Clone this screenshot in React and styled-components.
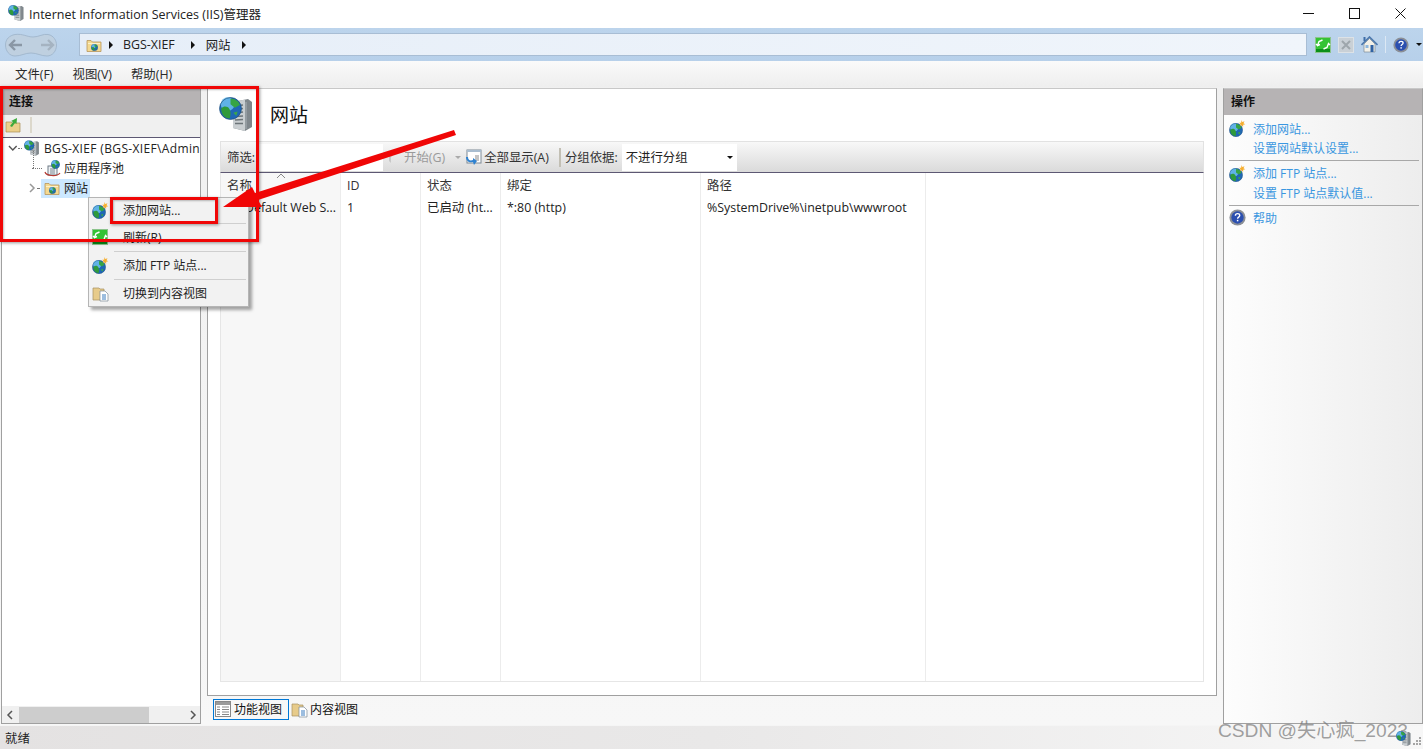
import React from 'react'
import styled, { createGlobalStyle } from 'styled-components'

const GlobalStyle = createGlobalStyle`
  html, body { margin: 0; padding: 0; background: #f5f5f5; }
  * { box-sizing: border-box; }
  body {
    font-family: "Open Sans", "Noto Sans CJK SC", sans-serif;
    font-size: 12.4px;
    color: #1c1c1c;
  }
`

const Window = styled.div`
  position: relative;
  width: 1423px;
  height: 749px;
  overflow: hidden;
  display: flex;
  flex-direction: column;
`

const TitleBar = styled.header`
  height: 28px;
  flex: none;
  background: #fff;
  display: flex;
  align-items: center;
  padding: 0 0 2px 8px;
  gap: 5px;
  font-size: 12.5px;
  color: #222;
`

const WindowControls = styled.div`
  margin-left: auto;
  display: flex;
  align-items: center;
  height: 100%;
`

const WindowButton = styled.div`
  width: 46px;
  height: 100%;
  display: flex;
  align-items: center;
  justify-content: center;
`

const AddressBar = styled.div`
  height: 33px;
  flex: none;
  display: flex;
  align-items: center;
  background: linear-gradient(#bcd4ec, #b7d0ea);
  padding: 0 0 0 5px;
`

const NavPill = styled.svg`
  flex: none;
  margin-right: 22px;
`

const Breadcrumb = styled.div`
  width: 1228px;
  height: 23px;
  background: linear-gradient(90deg, #e6eef8, #f0f5fb);
  border: 1px solid #a8bdd4;
  display: flex;
  align-items: center;
  padding-left: 6px;
  color: #222;
`

const Crumb = styled.span`
  margin: 0 ${(p) => p.$right}px 0 ${(p) => p.$left}px;
`

const Caret = styled.span`
  width: 0;
  height: 0;
  border-top: 4px solid transparent;
  border-bottom: 4px solid transparent;
  border-left: 4px solid #111;
  margin-left: ${(p) => p.$gap || 0}px;
`

const AddressTools = styled.div`
  display: flex;
  align-items: center;
  margin-left: 8px;
  gap: 7px;
`

const ToolSep = styled.span`
  width: 1px;
  height: 17px;
  background: #dce8f4;
`

const DownArrow = styled.span`
  width: 0;
  height: 0;
  border-left: 3px solid transparent;
  border-right: 3px solid transparent;
  border-top: 3px solid ${(p) => p.$color || '#111'};
`

const MenuBar = styled.nav`
  height: 26px;
  flex: none;
  display: flex;
  align-items: center;
  gap: 19px;
  padding: 0 0 1px 15px;
  background: linear-gradient(#fafafa, #eeeeee);
  font-size: 12.4px;
  color: #2a2a2a;
`

const Main = styled.main`
  flex: 1;
  min-height: 0;
  display: flex;
  gap: 6px;
  padding: 1px 0 1px 1px;
  background: linear-gradient(#f0f0f0, #f7f7f7);
`

const SidePanel = styled.section`
  width: 200px;
  flex: none;
  border: 1px solid #a0a0a0;
  border-top-color: #c8c8c8;
  background: ${(p) => p.$bg || '#fff'};
  display: flex;
  flex-direction: column;
`

const PanelHeader = styled.h2`
  margin: 0;
  height: 26px;
  flex: none;
  background: #b6b3b4;
  font-size: 12px;
  font-weight: 700;
  color: #111;
  display: flex;
  align-items: center;
  padding: 0 0 2px 7px;
`

const TreeToolbar = styled.div`
  height: 23px;
  flex: none;
  background: #f0f0f0;
  border-bottom: 1px solid #5d5873;
  display: flex;
  align-items: center;
  padding: 0 0 2px 3px;
  gap: 9px;
`

const ToolbarRule = styled.span`
  width: 2px;
  height: 16px;
  background: #dcd8cc;
`

const Tree = styled.ul`
  flex: 1;
  margin: 0;
  padding: 0;
  list-style: none;
  overflow: hidden;
  font-size: 12px;
`

const TreeRow = styled.li`
  position: relative;
  height: 20px;
  display: flex;
  align-items: center;
  white-space: nowrap;
  padding-left: ${(p) => p.$indent}px;
  color: #222;
`

const TreeDots = styled.span`
  width: ${(p) => p.$w}px;
  margin-right: 2px;
  border-top: 1px dotted #777;
  flex: none;
`

const TreeStem = styled.span`
  position: absolute;
  left: 31px;
  top: -7px;
  height: 17px;
  border-left: 1px dotted #777;
`

const TreeLabel = styled.span`
  margin-left: ${(p) => p.$gap || 4}px;
  letter-spacing: ${(p) => p.$spread || 0}px;
`

const SelectedNode = styled.span`
  display: flex;
  align-items: center;
  height: 19px;
  background: #cce8ff;
  width: 49px;
  padding-left: 3px;
  gap: 4px;
`

const HScroll = styled.div`
  height: 17px;
  flex: none;
  background: #f0f0f0;
  display: flex;
  align-items: center;
  justify-content: space-between;
  padding: 0 2px 0 3px;
`

const ScrollThumb = styled.span`
  width: 130px;
  height: 16px;
  background: #cdcdcd;
  margin-right: auto;
  margin-left: 4px;
`

const CenterColumn = styled.div`
  width: 1010px;
  flex: none;
  display: flex;
  flex-direction: column;
`

const CenterPanel = styled.section`
  flex: 1;
  min-height: 0;
  background: #fff;
  border: 1px solid #a0a0a0;
  border-top-color: #c8c8c8;
  display: flex;
  flex-direction: column;
  padding: 0 12px 13px 12px;
`

const PageHeader = styled.div`
  height: 52px;
  flex: none;
  display: flex;
  align-items: center;
  gap: 17px;
  padding: 0 0 3px 0;
  margin-left: -1px;
`

const PageTitle = styled.h1`
  margin: 0;
  font-size: 19px;
  font-weight: 400;
  color: #111;
`

const FilterBar = styled.div`
  height: 32px;
  flex: none;
  display: flex;
  align-items: center;
  background: linear-gradient(#f8f8f8, #dadada);
  border: 1px solid #e2e2e2;
  border-bottom: 1px solid #5d5873;
  padding-left: 6px;
  color: #333;
`

const FilterBox = styled.span`
  width: 127px;
  height: 27px;
  margin: 0 0 0 1px;
  background: #fff;
  display: flex;
  align-items: center;
  justify-content: flex-end;
  padding-right: 3px;
`

const FilterText = styled.span`
  display: inline-flex;
  align-items: center;
  color: ${(p) => p.$color || '#333'};
  margin-left: ${(p) => p.$gap || 0}px;
  white-space: nowrap;
`

const BarSep = styled.span`
  width: 2px;
  height: 19px;
  background: #c2bfb4;
  margin: 0 4px 0 10px;
`

const GroupSelect = styled.span`
  width: 115px;
  height: 27px;
  margin-left: 4px;
  background: #fff;
  display: flex;
  align-items: center;
  justify-content: space-between;
  padding: 0 4px;
  color: #222;
`

const Table = styled.div`
  flex: 1;
  min-height: 0;
  display: grid;
  grid-template-columns: 120px 80px 80px 200px 225px 1fr;
  border: 1px solid #e6e6e6;
  border-top: 0;
`

const Column = styled.div`
  border-right: 1px solid #ececec;
  background: ${(p) => (p.$tinted ? '#f7f7f7' : '#fff')};
  color: #333;
  padding-left: 6px;
  position: relative;
  white-space: nowrap;
  overflow: hidden;
  &:last-child { border-right: 0; }
`

const HeadCell = styled.div`
  height: 25px;
  line-height: 25px;
`

const BodyCell = styled.div`
  height: 19px;
  line-height: 19px;
  color: #222;
  padding-left: ${(p) => (p.$icon ? 18 : 0)}px;
`

const SortMark = styled.svg`
  position: absolute;
  left: 55px;
  top: 0;
`

const ViewTabs = styled.div`
  height: 28px;
  flex: none;
  display: flex;
  align-items: center;
  padding: 0 0 2px 6px;
  gap: 1px;
  font-size: 12px;
`

const ViewTab = styled.div`
  height: 21px;
  display: flex;
  align-items: center;
  gap: ${(p) => (p.$active ? 3 : 2)}px;
  padding: 0 ${(p) => (p.$active ? 6 : 2)}px 0 ${(p) => (p.$active ? 1 : 0)}px;
  border: 1px solid ${(p) => (p.$active ? '#0078d7' : 'transparent')};
  color: #111;
`

const ActionList = styled.ul`
  list-style: none;
  margin: 0;
  padding: 4px 3px 0 5px;
  flex: 1;
  font-size: 12px;
`

const ActionRow = styled.li`
  height: 19.5px;
  display: flex;
  align-items: center;
  gap: 7px;
  padding-left: ${(p) => (p.$plain ? 24 : 0)}px;
  color: #3a97e0;
  white-space: nowrap;
`

const ActionRule = styled.li`
  height: 1px;
  background: #a8a8a8;
  margin: 2px 0 2.5px 0;
`

const StatusBar = styled.footer`
  height: 24px;
  flex: none;
  display: flex;
  align-items: center;
  justify-content: space-between;
  padding: 0 1px 0 5px;
  background: linear-gradient(90deg, #e4e2e2, #e9e8e8 50%, #f7f7f7);
  border-top: 1px solid #f5f5f5;
  color: #222;
`

const StatusTray = styled.div`
  position: relative;
  z-index: 2;
  display: flex;
  align-items: flex-end;
  gap: 1px;
  padding-top: 2px;
`

const ContextMenu = styled.div`
  position: absolute;
  left: 88px;
  top: 197px;
  width: 161px;
  height: 110px;
  background: #f2f2f2;
  border: 1px solid #b5b5b5;
  box-shadow: 3px 3px 3px rgba(0, 0, 0, 0.35);
  padding: 0 1px;
  font-size: 12px;
`

const MenuItem = styled.div`
  height: ${(p) => (p.$first ? 26 : 28)}px;
  display: flex;
  align-items: center;
  gap: 14px;
  padding: 0 0 2px 2px;
  color: #222;
  white-space: nowrap;
  position: relative;
  &::after {
    content: '';
    display: ${(p) => (p.$last ? 'none' : 'block')};
    position: absolute;
    left: 24px;
    right: 1px;
    bottom: 0;
    height: 1px;
    background: #cfcfcf;
  }
`

const MenuIcon = styled.span`
  width: 17px;
  height: 17px;
  flex: none;
  display: flex;
`

const RedBox = styled.div`
  position: absolute;
  left: ${(p) => p.$x}px;
  top: ${(p) => p.$y}px;
  width: ${(p) => p.$w}px;
  height: ${(p) => p.$h}px;
  border: 3px solid #f00606;
  box-shadow: 1px 1px 3px rgba(0, 0, 0, 0.4), inset 1px 1px 2px rgba(0, 0, 0, 0.25);
`

const ArrowLayer = styled.svg`
  position: absolute;
  left: 0;
  top: 0;
  pointer-events: none;
`

const Watermark = styled.div`
  position: absolute;
  right: 15px;
  bottom: 6px;
  font-family: "Liberation Sans", "Noto Sans CJK SC", sans-serif;
  font-size: 19.2px;
  color: rgba(120, 120, 120, 0.7);
  white-space: nowrap;
`

const Globe = ({ size = 16, x = 0, y = 0 }) => (
  <svg x={x} y={y} width={size} height={size} viewBox="0 0 16 16">
    <circle cx="8" cy="8" r="7.6" fill="#1f67b5" />
    <circle cx="6" cy="5" r="4.8" fill="#6cc0f0" opacity="0.85" />
    <path d="M1.500 8c2-2 4.500-1.500 5.500 0s1.500 3 .5 7C4 15 1.500 12 1.500 8z" fill="#2f9a3c" />
    <path d="M8 1c3 0 6 2 6.500 4.500l-3.500 2-3-2.500z" fill="#36a444" />
    <path d="M10 11l3-1-1 3z" fill="#3ba648" />
    <circle cx="8" cy="8" r="7.6" fill="none" stroke="#1d4f7f" strokeWidth="0.5" />
  </svg>
)

const StarGlobe = () => (
  <svg width="17" height="17" viewBox="0 0 17 17">
    <Globe size={14} x={0} y={3} />
    <path d="M12.500 0l.8 2 2.200-.8-1 2 1.800 1-2.100.5-.1 2.200-1.400-1.600-1.900.9.800-2-1.500-1.500 2.100.1z" fill="#f6ae2f" />
  </svg>
)

const ServerGlobe = ({ size = 16 }) => (
  <svg width={size} height={size} viewBox="0 0 34 34">
    <path d="M14 5l15-3 4 3v25l-7 4-12-3z" fill="#7f878c" />
    <path d="M14 5l12-2.500V34l-12-3z" fill="#c9ced1" />
    <path d="M27 5v27" stroke="#a9b0b5" />
    <path d="M16 9l8-1M16 12.500l8-1M16 16l8-1M16 19.500l8-.5M16 23l8-.5M16 26.500l8 0" stroke="#6d7579" strokeWidth="1.400" />
    <Globe size={23} x={0} y={0} />
  </svg>
)

const FolderGlobe = () => (
  <svg width="16" height="16" viewBox="0 0 16 16">
    <path d="M1 3.500h4l1.500 1.500H15v9.500H1z" fill="#f4d990" stroke="#b8955a" strokeWidth="0.8" />
    <path d="M2 6h12v1H2z" fill="#fdf1c8" />
    <Globe size={7} x={5} y={7} />
  </svg>
)

const PoolIcon = () => (
  <svg width="17" height="17" viewBox="0 0 17 17">
    <rect x="4" y="6" width="9" height="9" fill="#eef2f5" stroke="#6f7b85" />
    <path d="M6 9h5M6 11h5M6 13h5" stroke="#7a8791" />
    <Globe size={9} x={7} y={0} />
    <path d="M1 12c1 4 12 5 15 1" fill="none" stroke="#b53a32" strokeWidth="1.200" />
  </svg>
)

const RefreshIcon = () => (
  <svg width="16" height="16" viewBox="0 0 16 16">
    <rect x="0.500" y="0.500" width="15" height="15" fill="#34c334" stroke="#8cc48c" />
    <rect x="1" y="12" width="14" height="3" fill="#0c8f18" />
    <path d="M7.500 3L4 4.500 2.500 8.500 1 7" fill="none" stroke="#fff" strokeWidth="1.400" />
    <path d="M2.500 8.500L5 7.500" stroke="#fff" strokeWidth="1.400" />
    <path d="M8.500 12l3.500-1.500 1.500-4 1.500 1.500" fill="none" stroke="#fff" strokeWidth="1.400" />
  </svg>
)

const StopIcon = () => (
  <svg width="16" height="16" viewBox="0 0 16 16">
    <rect x="0.500" y="0.500" width="15" height="15" fill="#c9d0d6" stroke="#dde2e6" />
    <path d="M4 4l8 8M12 4l-8 8" stroke="#9ea6ac" strokeWidth="2" />
  </svg>
)

const HomeIcon = () => (
  <svg width="17" height="17" viewBox="0 0 17 17">
    <path d="M3 8l5.500-5.500L14 8v8H3z" fill="#f3f1e8" stroke="#7d8a96" strokeWidth="0.700" />
    <path d="M0.500 9L8.500 1l8 8" fill="none" stroke="#4d79ad" strokeWidth="1.600" />
    <rect x="2.500" y="1" width="2" height="4" fill="#3f6ea8" />
    <rect x="9.500" y="9" width="3" height="7" fill="#2f62a3" />
    <rect x="4.500" y="9" width="3" height="3" fill="#8fb8dd" />
  </svg>
)

const HelpIcon = ({ size = 16 }) => (
  <svg width={size} height={size} viewBox="0 0 16 16">
    <circle cx="8" cy="8" r="7.600" fill="#8b8f96" />
    <circle cx="8" cy="8" r="5.800" fill="#2b4fb0" />
    <path d="M6 6.300C6 5 7 4.400 8.100 4.400c1.200 0 2 .7 2 1.700 0 1.500-2 1.500-2 3" fill="none" stroke="#fff" strokeWidth="1.300" />
    <rect x="7.400" y="10.200" width="1.400" height="1.400" fill="#fff" />
  </svg>
)

const Chevron = ({ dir = 'right', color = '#888' }) => (
  <svg width="10" height="10" viewBox="0 0 10 10">
    <path d={dir === 'down' ? 'M1 3l4 4 4-4' : dir === 'left' ? 'M7 1L3 5l4 4' : 'M3 1l4 4-4 4'} fill="none" stroke={color} strokeWidth="1.500" />
  </svg>
)

const AddSiteFolder = () => (
  <svg width="16" height="16" viewBox="0 0 16 16">
    <path d="M1 5h5l1 1h8v9H1z" fill="#ecd08b" stroke="#a98c54" strokeWidth="0.700" />
    <path d="M5 9l3-4-2-1 6-3-.5 6-1.500-1-3 4z" fill="#3cab3c" />
  </svg>
)

const PagesIcon = () => (
  <svg width="17" height="17" viewBox="0 0 17 17">
    <path d="M1 3h6l1 1h4v11H1z" fill="#e7cb8a" stroke="#a78f5f" strokeWidth="0.700" />
    <path d="M8 6h5l3 3v7H8z" fill="#fff" stroke="#7d8a96" strokeWidth="0.700" />
    <path d="M10 10h4M10 12h4M10 14h4" stroke="#3a7cc0" />
  </svg>
)

const GridIcon = () => (
  <svg width="16" height="16" viewBox="0 0 16 16">
    <rect x="0.500" y="0.500" width="15" height="15" fill="#fff" stroke="#888" />
    <rect x="1" y="1" width="14" height="3" fill="#9a9a9a" />
    <path d="M2 6h3M2 8.500h3M2 11h3M2 13.500h3M7 6h7M7 8.500h7M7 11h7M7 13.500h7" stroke="#888" />
  </svg>
)

const ShowAllIcon = () => (
  <svg width="17" height="17" viewBox="0 0 17 17">
    <rect x="2" y="1" width="14" height="13" fill="#fff" stroke="#7d8a96" />
    <rect x="2" y="1" width="14" height="2" fill="#a9bdd0" />
    <path d="M10 7h4M10 9h4M10 11h4" stroke="#8a8a8a" />
    <path d="M1 8c0 4 3 6 7 5l1 3 3-4-4-3v2C5 12 3 11 3 8z" fill="#2f82d0" />
  </svg>
)

const StartIcon = () => (
  <svg width="14" height="14" viewBox="0 0 14 14">
    <path d="M1 3h11L8 7v6l-2-2V7z" fill="#c8c8c8" />
  </svg>
)

const GripDots = () => (
  <svg width="10" height="10" viewBox="0 0 10 10">
    <path d="M7 1h2v2H7zM4 4h2v2H4zM7 4h2v2H7zM1 7h2v2H1zM4 7h2v2H4zM7 7h2v2H7z" fill="#a5a5a5" />
  </svg>
)

const columns = [
  { title: '名称', cell: 'Default Web S...', tinted: true },
  { title: 'ID', cell: '1' },
  { title: '状态', cell: '已启动 (ht...' },
  { title: '绑定', cell: '*:80 (http)' },
  { title: '路径', cell: '%SystemDrive%\\inetpub\\wwwroot' },
  { title: '', cell: '' },
]

const menuItems = [
  { icon: <StarGlobe />, label: '添加网站...', first: true },
  { icon: <RefreshIcon />, label: '刷新(R)' },
  { icon: <StarGlobe />, label: '添加 FTP 站点...' },
  { icon: <PagesIcon />, label: '切换到内容视图', last: true },
]

function App() {
  return (
    <Window>
      <GlobalStyle />
      <TitleBar>
        <ServerGlobe size={16} />
        <span>Internet Information Services (IIS)管理器</span>
        <WindowControls>
          <WindowButton>
            <svg width="11" height="11" viewBox="0 0 11 11"><path d="M0 5.500h11" stroke="#111" /></svg>
          </WindowButton>
          <WindowButton>
            <svg width="11" height="11" viewBox="0 0 11 11"><rect x="0.500" y="0.500" width="10" height="10" fill="none" stroke="#111" /></svg>
          </WindowButton>
          <WindowButton>
            <svg width="11" height="11" viewBox="0 0 11 11"><path d="M0.500 0.500l10 10M10.500 0.500l-10 10" stroke="#111" /></svg>
          </WindowButton>
        </WindowControls>
      </TitleBar>

      <AddressBar>
        <NavPill width="52" height="24" viewBox="0 0 52 24">
          <path d="M10 1.500C18 .5 22 4 28 4s10-3.500 15-2.500C49 2.500 51.500 8 51.500 12c0 6-4 11-9.500 11-6 0-10-3-16-3s-10 3-16 3C4.500 23 .5 18 .5 12S4.500 2.500 10 1.500z" fill="#bfd0e0" stroke="#a3b9cf" />
          <path d="M10 7l-5 5 5 5M5 12h12" fill="none" stroke="#8a97a5" strokeWidth="2.400" />
          <path d="M43 7l5 5-5 5M48 12H36" fill="none" stroke="#a5b3c1" strokeWidth="2.400" />
        </NavPill>
        <Breadcrumb>
          <FolderGlobe />
          <Caret $gap={7} />
          <Crumb $left={10} $right={16}>BGS-XIEF</Crumb>
          <Caret />
          <Crumb $left={11} $right={12}>网站</Crumb>
          <Caret />
        </Breadcrumb>
        <AddressTools>
          <RefreshIcon />
          <StopIcon />
          <HomeIcon />
          <ToolSep />
          <HelpIcon size={16} />
          <DownArrow />
        </AddressTools>
      </AddressBar>

      <MenuBar>
        <span>文件(F)</span>
        <span>视图(V)</span>
        <span>帮助(H)</span>
      </MenuBar>

      <Main>
        <SidePanel>
          <PanelHeader>连接</PanelHeader>
          <TreeToolbar>
            <AddSiteFolder />
            <ToolbarRule />
          </TreeToolbar>
          <Tree>
            <TreeRow $indent={6}>
              <Chevron dir="down" color="#555" />
              <TreeDots $w={4} />
              <ServerGlobe size={16} />
              <TreeLabel $gap={5} $spread={0.35}>BGS-XIEF (BGS-XIEF\Admin</TreeLabel>
            </TreeRow>
            <TreeRow $indent={30}>
              <TreeStem />
              <TreeDots $w={10} />
              <PoolIcon />
              <TreeLabel $gap={3}>应用程序池</TreeLabel>
            </TreeRow>
            <TreeRow $indent={25}>
              <Chevron color="#999" />
              <TreeDots $w={2} />
              <SelectedNode>
                <FolderGlobe />
                <span>网站</span>
              </SelectedNode>
            </TreeRow>
          </Tree>
          <HScroll>
            <Chevron dir="left" color="#555" />
            <ScrollThumb />
            <Chevron color="#555" />
          </HScroll>
        </SidePanel>

        <CenterColumn>
          <CenterPanel>
            <PageHeader>
              <ServerGlobe size={34} />
              <PageTitle>网站</PageTitle>
            </PageHeader>
            <FilterBar>
              <FilterText>筛选:</FilterText>
              <FilterBox><DownArrow /></FilterBox>
              <StartIcon />
              <FilterText $color="#9a9a9a" $gap={7}>开始(G)</FilterText>
              <FilterText $gap={10}><DownArrow $color="#aaa" /></FilterText>
              <FilterText $gap={4}><ShowAllIcon /></FilterText>
              <FilterText $gap={2}>全部显示(A)</FilterText>
              <BarSep />
              <FilterText>分组依据:</FilterText>
              <GroupSelect>
                <span>不进行分组</span>
                <DownArrow />
              </GroupSelect>
            </FilterBar>
            <Table>
              {columns.map((col, i) => (
                <Column key={i} $tinted={col.tinted}>
                  {col.tinted && (
                    <SortMark width="10" height="7" viewBox="0 0 10 7">
                      <path d="M1 5l4-4 4 4" fill="none" stroke="#888" />
                    </SortMark>
                  )}
                  <HeadCell>{col.title}</HeadCell>
                  <BodyCell $icon={col.tinted}>{col.cell}</BodyCell>
                </Column>
              ))}
            </Table>
          </CenterPanel>
          <ViewTabs>
            <ViewTab $active>
              <GridIcon />
              功能视图
            </ViewTab>
            <ViewTab>
              <PagesIcon />
              内容视图
            </ViewTab>
          </ViewTabs>
        </CenterColumn>

        <SidePanel $bg="linear-gradient(90deg, #fdfdfd, #ededed)">
          <PanelHeader>操作</PanelHeader>
          <ActionList>
            <ActionRow><StarGlobe />添加网站...</ActionRow>
            <ActionRow $plain>设置网站默认设置...</ActionRow>
            <ActionRule />
            <ActionRow><StarGlobe />添加 FTP 站点...</ActionRow>
            <ActionRow $plain>设置 FTP 站点默认值...</ActionRow>
            <ActionRule />
            <ActionRow><HelpIcon size={17} />帮助</ActionRow>
          </ActionList>
        </SidePanel>
      </Main>

      <StatusBar>
        <span>就绪</span>
        <StatusTray>
          <ServerGlobe size={15} />
          <GripDots />
        </StatusTray>
      </StatusBar>

      <ContextMenu>
        {menuItems.map((item) => (
          <MenuItem key={item.label} $first={item.first} $last={item.last}>
            <MenuIcon>{item.icon}</MenuIcon>
            {item.label}
          </MenuItem>
        ))}
      </ContextMenu>

      <RedBox $x={0} $y={86} $w={259} $h={156} />
      <RedBox $x={110} $y={197} $w={108} $h={27} />
      <ArrowLayer width="1423" height="749" viewBox="0 0 1423 749">
        <polygon points="223,207 252,187 255,193 454,130 456,135 258,200 262,207" fill="#f00606" />
      </ArrowLayer>
      <Watermark>CSDN @失心疯_2023</Watermark>
    </Window>
  )
}

export default App
